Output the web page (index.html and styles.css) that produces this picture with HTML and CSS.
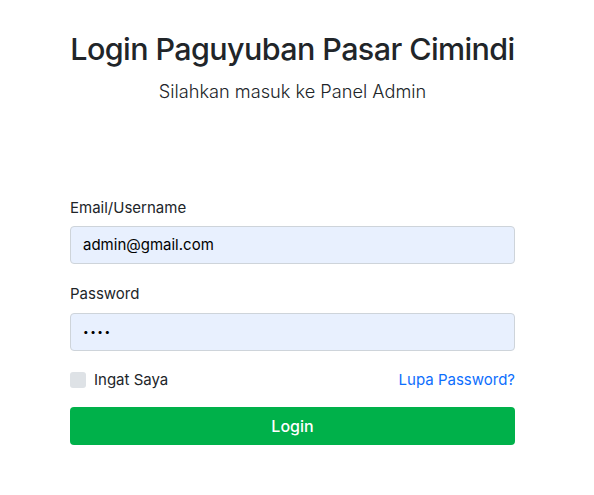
FILE: index.html
```html
<!DOCTYPE html>
<html>
<head>
<meta charset="utf-8">
<link rel="stylesheet" href="styles.css">
</head>
<body>
<main class="wrap">
  <header class="head">
    <h2 class="title">Login Paguyuban Pasar Cimindi</h2>
    <p class="subtitle">Silahkan masuk ke Panel Admin</p>
  </header>
  <form class="form">
    <div class="field">
      <label class="label">Email/Username</label>
      <div class="input">admin@gmail.com</div>
    </div>
    <div class="field field-last">
      <label class="label">Password</label>
      <div class="input dots">••••</div>
    </div>
    <div class="row">
      <label class="check"><span class="box"></span>Ingat Saya</label>
      <a class="link">Lupa Password?</a>
    </div>
    <button class="btn" type="button">Login</button>
  </form>
</main>
</body>
</html>
```
FILE: styles.css
```css
* { box-sizing: border-box; }
html, body { margin: 0; background: #fff; }
body {
  font-family: Inter, "Noto Sans", sans-serif;
  color: #212529;
  font-size: 16px;
  line-height: 1.5;
}
.wrap {
  width: 445px;
  margin-left: 70px;
  padding-top: 31px;
}
.head { text-align: center; }
.title {
  margin: 0;
  font-size: 30.5px;
  font-weight: 500;
  line-height: 1.2;
  letter-spacing: -0.6px;
  white-space: nowrap;
}
.subtitle {
  margin: 10px 0 0;
  font-size: 18.2px;
  font-weight: 300;
}
.form { margin-top: 92px; }
.field { margin-bottom: 19px; }
.field-last { margin-bottom: 18px; }
.label {
  display: block;
  margin-bottom: 7px;
  font-size: 15px;
}
.input {
  height: 38px;
  padding: 0 12px;
  display: flex;
  align-items: center;
  background: #e8f0fe;
  border: 1px solid #ced4da;
  border-radius: 4px;
  font-size: 15px;
  color: #000;
}
.dots { font-size: 10px; letter-spacing: 1.5px; }
.row {
  display: flex;
  justify-content: space-between;
  align-items: center;
  font-size: 15px;
}
.check { display: flex; align-items: center; gap: 8px; }
.box {
  width: 16px; height: 16px;
  border-radius: 3px;
  background: #dee2e6;
}
.link { color: #0d6efd; text-decoration: none; }
.btn {
  display: block;
  width: 100%;
  height: 38px;
  margin-top: 16px;
  border: 0;
  border-radius: 4px;
  background: #00b14a;
  color: #fff;
  font-family: inherit;
  font-size: 16px;
  font-weight: 500;
}
```
